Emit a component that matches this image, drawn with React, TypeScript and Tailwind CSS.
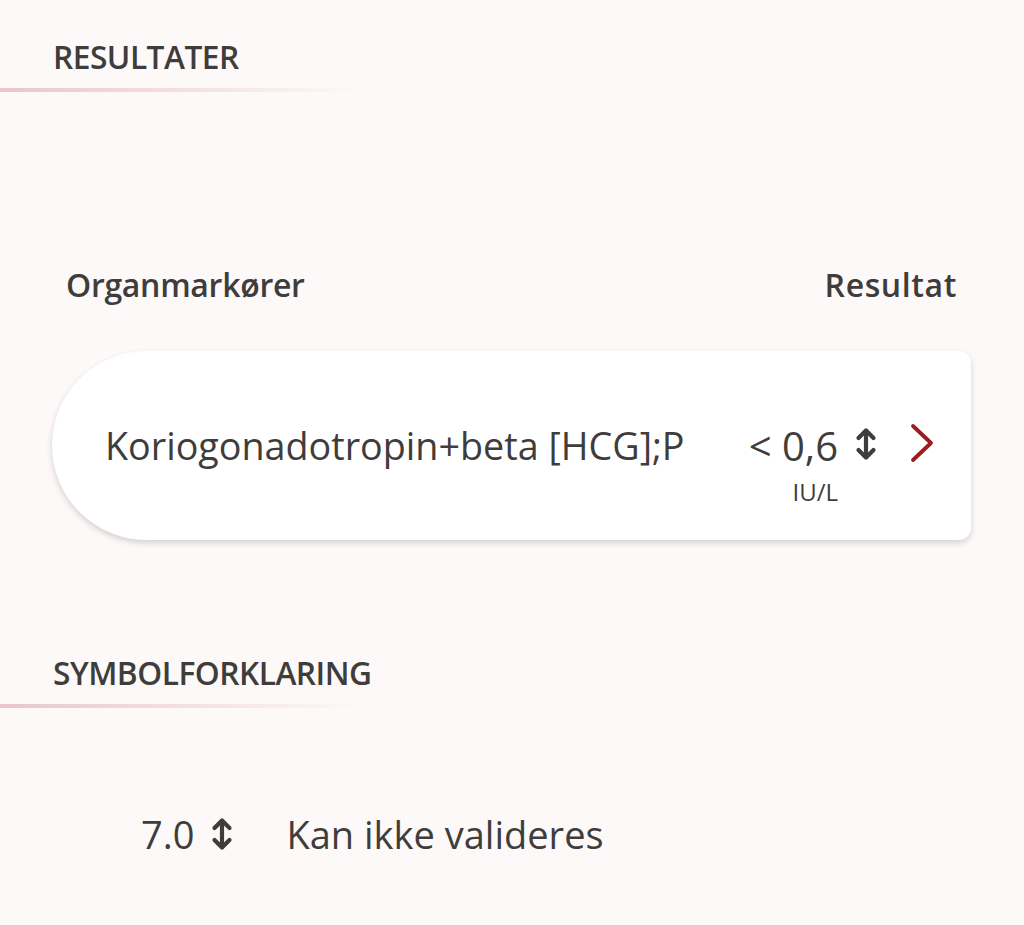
import React from "react";

const font = { fontFamily: '"Open Sans", "Noto Sans", sans-serif' };

function UpDown({ className = "" }: { className?: string }) {
  return (
    <svg viewBox="0 0 24 34" className={className} fill="none" stroke="currentColor" strokeWidth={4.2} strokeLinecap="round" strokeLinejoin="round">
      <path d="M12 4 L12 30" />
      <path d="M4.5 11 L12 3.5 L19.5 11" />
      <path d="M4.5 23 L12 30.5 L19.5 23" />
    </svg>
  );
}

function Chevron({ className = "" }: { className?: string }) {
  return (
    <svg viewBox="0 0 26 40" className={className} fill="none" stroke="currentColor" strokeWidth={3.8} strokeLinecap="round" strokeLinejoin="round">
      <path d="M4 3 L22 20 L4 37" />
    </svg>
  );
}

function SectionHeader({ title }: { title: string }) {
  return (
    <div className="flex flex-col">
      <div className="pl-[53px] text-[31.7px] font-semibold leading-[36px] tracking-[-0.5px] text-[#3f3d3c]">{title}</div>
      <div className="mt-[13px] h-[4px] w-[360px] bg-[linear-gradient(to_right,#e9c6cc,#f3dfe2_50%,rgba(253,249,248,0))]" />
    </div>
  );
}

export default function App() {
  return (
    <div className="min-h-[925px] w-[1024px] bg-[#fdf9f8] pt-[39px]" style={font}>
      <SectionHeader title="RESULTATER" />
      <div className="mt-[175px] flex items-center justify-between pl-[66px] pr-[67px] text-[32px] font-semibold leading-[36px] text-[#3f3d3c]">
        <span className="tracking-[-0.3px]">Organmarkører</span>
        <span className="tracking-[0.6px]">Resultat</span>
      </div>
      <div className="ml-[52px] mr-[53px] mt-[48px] flex h-[189px] items-center rounded-l-[95px] rounded-r-[12px] bg-white pl-[53px] pr-[36px] shadow-[0_3px_6px_rgba(0,0,0,0.16)]">
        <span className="flex-1 text-[37.7px] leading-[44px] text-[#3f3d3c]">Koriogonadotropin+beta [HCG];P</span>
        <div className="flex flex-col items-end pt-[38px]">
          <span className="text-[40px] leading-[44px] text-[#3f3d3c]">&lt; 0,6</span>
          <span className="mt-[10px] text-[24px] leading-[28px] text-[#3f3d3c]">IU/L</span>
        </div>
        <UpDown className="ml-[16px] mb-[4px] h-[34px] w-[24px] text-[#3f3d3c]" />
        <Chevron className="ml-[31px] mb-[6px] h-[40px] w-[26px] text-[#9b1d20]" />
      </div>
      <div className="mt-[115px]">
        <SectionHeader title="SYMBOLFORKLARING" />
      </div>
      <div className="mt-[104px] flex items-center pl-[141px] text-[38px] leading-[44px] text-[#3f3d3c]">
        <span>7.0</span>
        <UpDown className="ml-[16px] h-[34px] w-[24px]" />
        <span className="ml-[52px]">Kan ikke valideres</span>
      </div>
    </div>
  );
}
